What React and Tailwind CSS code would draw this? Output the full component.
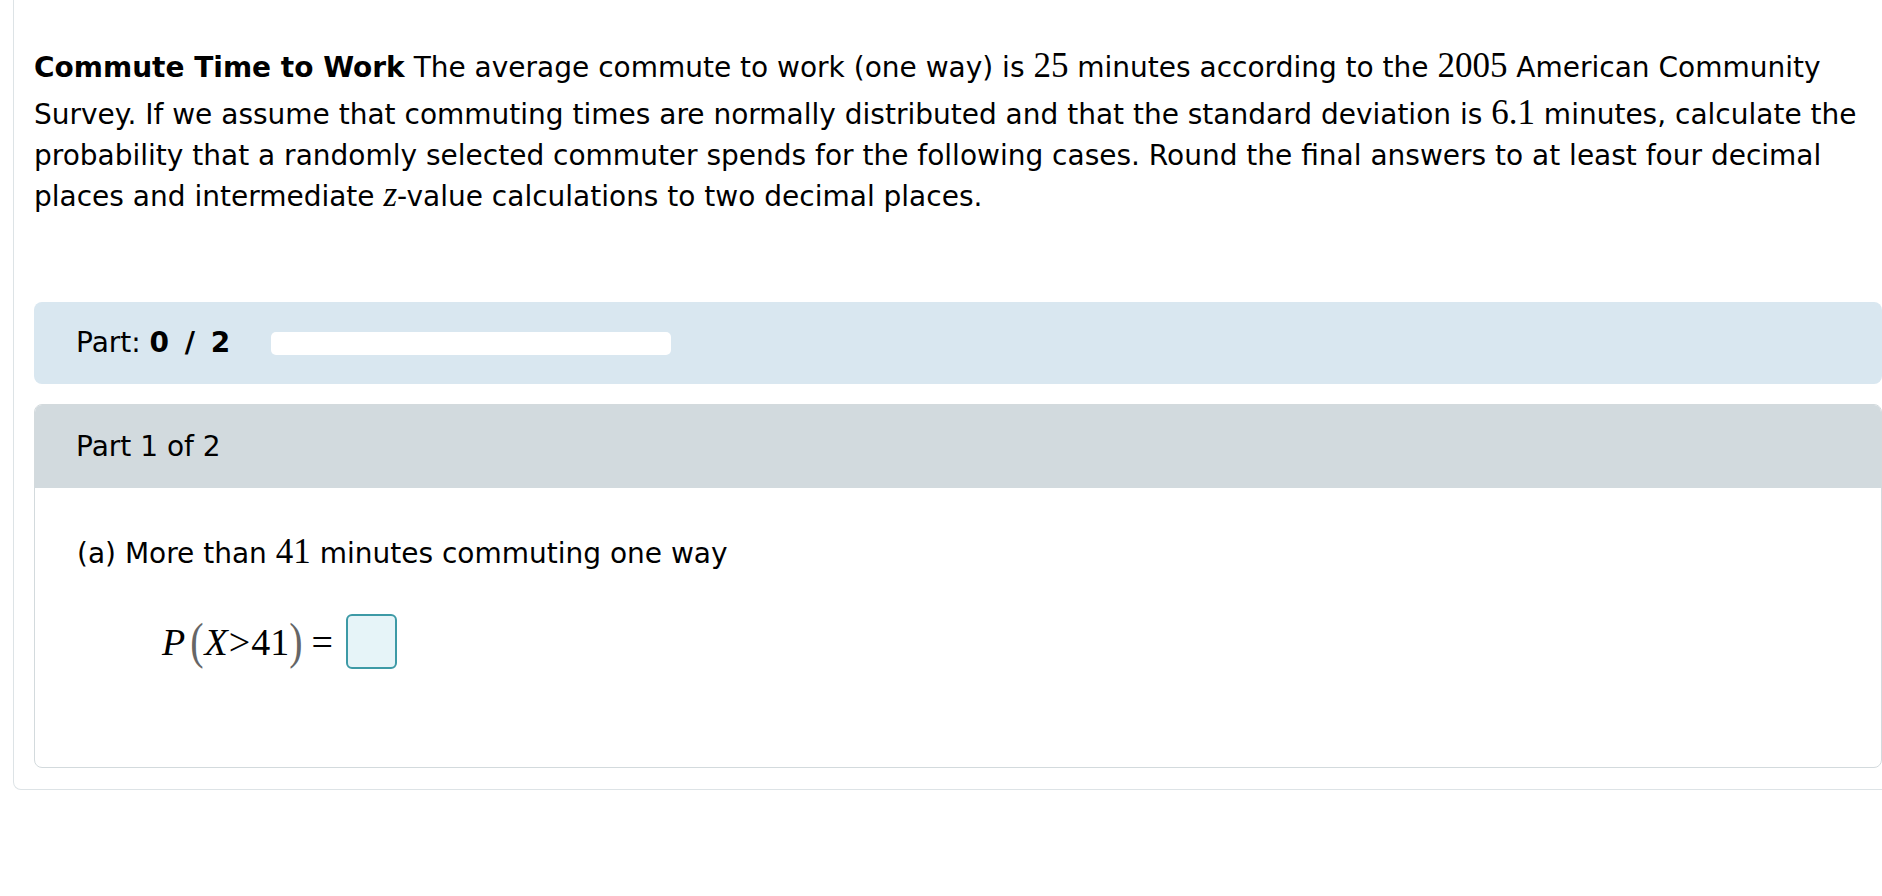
import React from "react";

const M = ({ children, className = "" }) => (
  <span className={`font-["Liberation_Serif",serif] text-[35px] leading-none ${className}`}>{children}</span>
);

const App = () => {
  return (
    <div className='h-[896px] w-[1882px] overflow-hidden bg-white font-["DejaVu_Sans",Verdana,sans-serif] text-black'>
      <div className="ml-[13px] w-[1910px] rounded-b-[8px] border-x border-b border-[#dde3e6] px-[20px] pb-[21px] pt-[47px]">
        <p className="w-[1848px] text-[28px] leading-[41px]">
          <b>Commute Time to Work</b> The average commute to work (one way) is{" "}
          <M className="inline-block pb-[11px]">25</M> minutes according to the <M>2005</M> American Community Survey. If we
          assume that commuting times are normally distributed and that the standard deviation is <M>6.1</M> minutes,
          calculate the probability that a randomly selected commuter spends for the following cases. Round the final
          answers to at least four decimal places and intermediate <M className="italic">z</M>-value calculations to two
          decimal places.
        </p>

        <div className="mt-[85px] flex h-[82px] w-[1848px] items-center rounded-[8px] bg-[#d9e7f0] pl-[42px] text-[28px]">
          <span>
            Part: <b className="tracking-[1px] [word-spacing:4px]">0 / 2</b>
          </span>
          <div className="ml-[40px] h-[23px] w-[400px] rounded-[5px] bg-white" />
        </div>

        <div className="mt-[20px] w-[1848px] overflow-hidden rounded-[8px] border border-[#d3dadd] text-[28px]">
          <div className="flex h-[83px] items-center bg-[#d2dade] pl-[41px]">Part 1 of 2</div>
          <div className="px-[42px] pb-[98px] pt-[45px]">
            <p className="leading-[41px]">
              (a) More than <M>41</M> minutes commuting one way
            </p>
            <div className='mt-[40px] flex items-center pl-[85px] font-["Liberation_Serif",serif] text-[38px] leading-none'>
              <span className="italic">P</span>
              <span className="ml-[5px] inline-block scale-y-125 text-[40px] font-light text-[#666]">(</span>
              <span className="ml-[1px] italic">X</span>
              <span className="ml-[1px]">&gt;</span>
              <span className="ml-[1px]">41</span>
              <span className="inline-block scale-y-125 text-[40px] font-light text-[#666]">)</span>
              <span className="ml-[9px]">=</span>
              <span className="ml-[13px] h-[55px] w-[51px] rounded-[6px] border-2 border-[#3d9aa6] bg-[#e6f4f8]" />
            </div>
          </div>
        </div>
      </div>
    </div>
  );
};

export default App;
